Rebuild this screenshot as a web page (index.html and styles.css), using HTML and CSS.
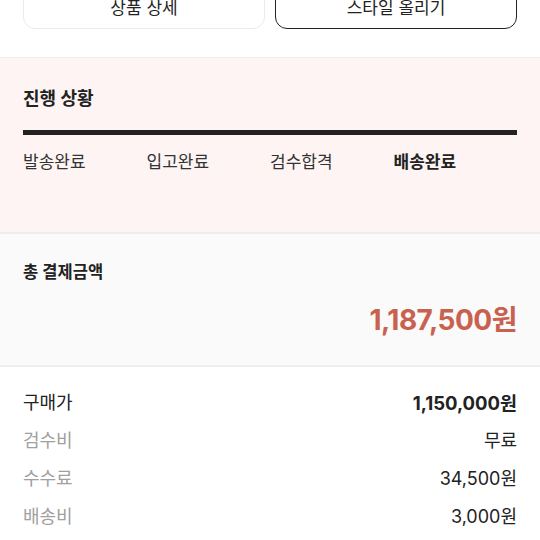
FILE: index.html
```html
<!DOCTYPE html>
<html lang="ko">
<head>
  <meta charset="UTF-8" />
  <meta name="viewport" content="width=device-width, initial-scale=1" />
  <title>주문 상세</title>
  <link rel="stylesheet" href="styles.css">
</head>
<body>

  <div class="actions">
    <button class="btn">상품 상세</button>
    <button class="btn btn-dark">스타일 올리기</button>
  </div>

  <!-- 진행 상황 -->
  <section class="progress">
    <h2 class="section-title">진행 상황</h2>
    <div class="progress-bar"></div>
    <div class="steps">
      <div class="step">발송완료</div>
      <div class="step">입고완료</div>
      <div class="step">검수합격</div>
      <div class="step current">배송완료</div>
    </div>
  </section>

  <!-- 총 결제금액 -->
  <section class="total">
    <div class="total-label">총 결제금액</div>
    <div class="total-price">1,187,500원</div>
  </section>

  <!-- 상세 금액 -->
  <section class="details">
    <div class="row main">
      <span class="label">구매가</span>
      <span class="value">1,150,000원</span>
    </div>
    <div class="row">
      <span class="label">검수비</span>
      <span class="value">무료</span>
    </div>
    <div class="row">
      <span class="label">수수료</span>
      <span class="value">34,500원</span>
    </div>
    <div class="row">
      <span class="label">배송비</span>
      <span class="value">3,000원</span>
    </div>
  </section>

</body>
</html>
```

FILE: styles.css
```css
body {
  font-family: Inter, 'Noto Sans CJK KR', sans-serif;
  background: white;
  color: #222;
  margin: 0;
  width: 540px;
  overflow: hidden;
}

.actions {
  display: grid;
  grid-template-columns: 1fr 1fr;
  gap: 10px;
  padding: 0 23px;
  margin-top: -16px;
  margin-bottom: 28px;
}

.btn {
  height: 45px;
  border: 1px solid #ebebeb;
  border-radius: 12px;
  background: white;
  font-family: inherit;
  font-size: 17px;
  color: #222;
}

.btn-dark {
  border: 1.5px solid #222;
}

.progress {
  background: #fdf4f3;
  border-top: 1px solid #f1eded;
  border-bottom: 2px solid #f1ecec;
  padding: 29px 23px 58px;
}

.section-title {
  margin: 0;
  font-size: 18px;
  line-height: 24px;
  font-weight: 700;
}

.progress-bar {
  height: 5px;
  background: #222;
  margin-top: 19px;
}

.steps {
  display: grid;
  grid-template-columns: repeat(4, 1fr);
  margin-top: 15px;
}

.step {
  font-size: 17px;
  line-height: 24px;
  color: #333;
}

.step.current {
  font-weight: 700;
  color: #222;
}

.total {
  background: #fafafa;
  border-bottom: 2px solid #eeeeee;
  padding: 27px 23px;
}

.total-label {
  font-size: 16.5px;
  line-height: 22px;
  font-weight: 600;
}

.total-price {
  margin-top: 19px;
  text-align: right;
  font-size: 28px;
  line-height: 36px;
  font-weight: 700;
  color: #c8624f;
  letter-spacing: -0.5px;
}

.details {
  padding: 17px 23px 0;
}

.row {
  display: flex;
  justify-content: space-between;
  font-size: 18px;
  line-height: 38px;
}

.row .label {
  color: #a0a0a0;
}

.row .value {
  color: #222;
}

.row.main .label {
  color: #222;
}

.row.main .value {
  font-weight: 700;
  font-size: 18.5px;
}
```
